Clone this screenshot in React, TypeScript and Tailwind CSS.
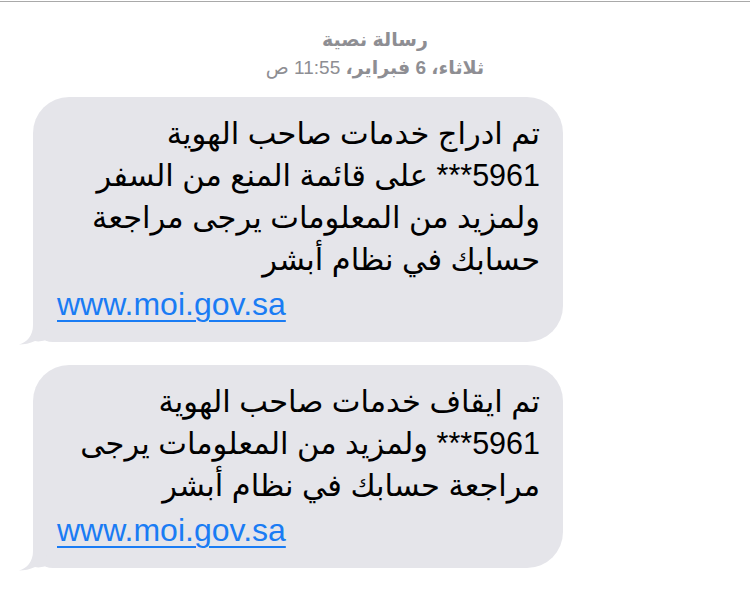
import React from 'react'

const arabicFont = "font-['Liberation_Sans','DejaVu_Sans',sans-serif]"

function Tail() {
    return (
        <svg
            className="absolute left-[-14px] bottom-[-3px]"
            width="40"
            height="30"
            viewBox="0 0 40 30"
        >
            <path
                d="M14,0 L30,0 L26,25.3 C22,26.5 19,26.8 16,26 C11,28.5 5,29.5 0,29.5 C8,27 14,21 14,10 Z"
                fill="#e5e5ea"
            />
        </svg>
    )
}

function Bubble({ lines }: { lines: string[] }) {
    return (
        <div className="relative w-[530px] rounded-[36px] rounded-bl-[20px] bg-[#e5e5ea] pt-[15px] pb-[13px] pl-[24px] pr-[23px]">
            {lines.map((line, i) => (
                <div key={i} dir="rtl" className="text-right text-[30.5px] leading-[42px] text-black whitespace-nowrap">
                    {line}
                </div>
            ))}
            <div dir="ltr" className="text-left text-[32px] leading-[49px]">
                <a className="text-[#1a7cf4] underline decoration-[2px] underline-offset-[5px]">www.moi.gov.sa</a>
            </div>
            <Tail />
        </div>
    )
}

export default function App() {
    return (
        <div className={`w-[750px] h-[612px] bg-white ${arabicFont}`}>
            <div className="h-px bg-white" />
            <div className="h-px bg-[#a9a9a9]" />
            <div dir="rtl" className="pt-[24px] text-center text-[19px] leading-[28px] text-[#8e8e93]">
                <div className="font-bold">رسالة نصية</div>
                <div>
                    <span className="font-bold">ثلاثاء، 6 فبراير،</span> 11:55 ص
                </div>
            </div>
            <div className="flex flex-col gap-[23px] pl-[33px] pt-[15px]">
                <Bubble
                    lines={[
                        'تم ادراج خدمات صاحب الهوية',
                        '5961*** على قائمة المنع من السفر',
                        'ولمزيد من المعلومات يرجى مراجعة',
                        'حسابك في نظام أبشر',
                    ]}
                />
                <Bubble
                    lines={[
                        'تم ايقاف خدمات صاحب الهوية',
                        '5961*** ولمزيد من المعلومات يرجى',
                        'مراجعة حسابك في نظام أبشر',
                    ]}
                />
            </div>
        </div>
    )
}
